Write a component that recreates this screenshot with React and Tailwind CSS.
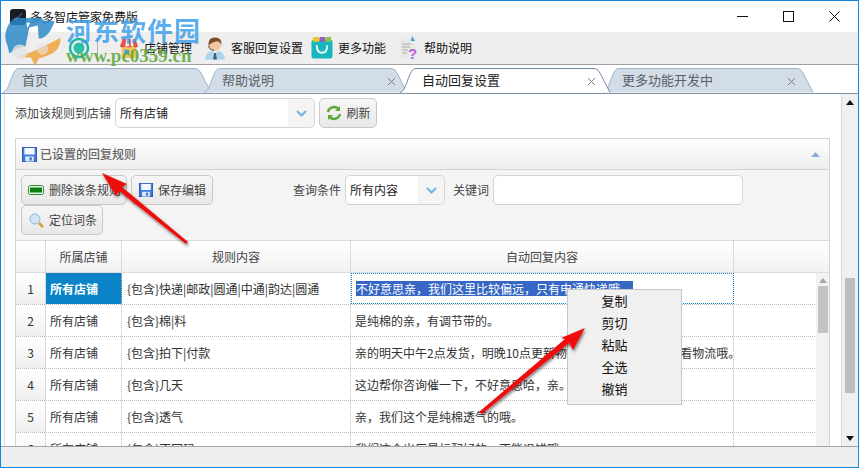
import React from "react";

const font = { fontFamily: '"Noto Sans CJK SC","Liberation Sans",sans-serif' };

function Save({ size = 16 }) {
  return (
    <svg width={size} height={size} viewBox="0 0 16 16">
      <rect x="0.5" y="0.5" width="15" height="15" fill="#3f78e0" stroke="#2a55b0" />
      <rect x="2.5" y="1" width="11" height="7" fill="#f4f8ff" />
      <rect x="3.5" y="10" width="9" height="5.5" fill="#dfe7f5" />
      <rect x="8" y="11" width="2.5" height="3.5" fill="#3f78e0" />
    </svg>
  );
}

function Tab({ label, active, close, w, closeRight, textLeft }) {
  return (
    <div className={`relative h-[25px] -ml-[8px] shrink-0 ${active ? "z-20" : "z-10"}`} style={{ width: w }}>
      <svg className="absolute inset-0" width={w} height="25" viewBox={`0 0 ${w} 25`} preserveAspectRatio="none">
        <path
          d={`M0 24.5 C6 24 8 6 13 1.5 Q14 0.5 17 0.5 H${w - 17} Q${w - 13} 0.5 ${w - 11} 5 L${w - 1} 24.5`}
          fill={active ? "#ffffff" : "#d3dde8"}
          stroke={active ? "#6f8aa8" : "#9db2c9"}
        />
      </svg>
      <span className={`absolute top-[2px] text-[13px] leading-[20px] ${active ? "text-[#222]" : "text-[#5b5f66]"}`} style={{ left: textLeft }}>{label}</span>
      {close && (
        <svg className="absolute top-[9px]" style={{ right: closeRight }} width="9" height="9" viewBox="0 0 9 9">
          <path d="M1 1 L8 8 M8 1 L1 8" stroke="#7b8087" strokeWidth="1" />
        </svg>
      )}
    </div>
  );
}

function Btn({ icon, label, className = "" }) {
  return (
    <div className={`h-[30px] flex items-center gap-[5px] rounded-[5px] border border-[#c8c8c8] bg-gradient-to-b from-[#f6f6f6] to-[#e8e8e8] text-[12px] text-[#444] ${className}`}>
      {icon}
      <span>{label}</span>
    </div>
  );
}

const rows = [
  ["1", "所有店铺", "{包含}快递|邮政|圆通|中通|韵达|圆通", ""],
  ["2", "所有店铺", "{包含}棉|料", "是纯棉的亲，有调节带的。"],
  ["3", "所有店铺", "{包含}拍下|付款", "亲的明天中午2点发货，明晚10点更新物流信息，到时可以\u00A0\u00A0去看物流哦。"],
  ["4", "所有店铺", "{包含}几天", "这边帮你咨询催一下，不好意思哈，亲。"],
  ["5", "所有店铺", "{包含}透气", "亲，我们这个是纯棉透气的哦。"],
  ["6", "所有店铺", "{包含}不回码", "我们这个出厂是标配好的，不能退错哦。"],
];

function Row({ r, i }) {
  const first = i === 0;
  return (
    <div className="flex h-[32px] shrink-0 border-b border-dotted border-[#bdbdbd] text-[12px] text-[#333]">
      <div className="w-[30px] shrink-0 flex items-center justify-center bg-gradient-to-b from-white to-[#efefef] border-r border-dotted border-[#bdbdbd]">{r[0]}</div>
      <div className={`w-[76px] shrink-0 flex items-center border-r border-dotted border-[#bdbdbd] px-[4px] ${first ? "bg-[#0a84c6] text-white font-bold" : ""}`}>{r[1]}</div>
      <div className="w-[229px] shrink-0 flex items-center border-r border-dotted border-[#bdbdbd] px-[5px] whitespace-nowrap overflow-hidden">{r[2]}</div>
      <div className={`w-[383px] shrink-0 flex items-center px-[4px] whitespace-nowrap overflow-hidden ${first ? "border border-dotted border-[#0a84c6]" : "border-r border-dotted border-[#bdbdbd]"}`}>
        {first ? (
          <span className="bg-[#3767c4] text-white text-[12px] leading-[15px] w-[277px] overflow-hidden">不好意思亲，我们这里比较偏远，只有申通快递哦</span>
        ) : r[3]}
      </div>
      <div className="flex-1" />
    </div>
  );
}

export default function App() {
  return (
    <div className="relative w-[859px] h-[468px] overflow-hidden bg-white border border-[#1585d8] flex flex-col" style={font}>
      {/* title */}
      <div className="h-[31px] shrink-0 flex items-center bg-white pl-[9px]">
        <svg width="16" height="16" viewBox="0 0 16 16">
          <rect width="16" height="16" rx="3" fill="#1b1b22" />
          <path d="M3 11 L7 8 L6 12 L12 4" stroke="#4a7fb5" fill="none" />
        </svg>
        <span className="ml-[4px] text-[12px] text-[#111]">多多智店管家免费版</span>
        <div className="ml-auto flex items-center">
          <svg className="mr-[35px]" width="11" height="11" viewBox="0 0 11 11"><path d="M0 5.5 H11" stroke="#111" /></svg>
          <svg className="mr-[35px]" width="11" height="11" viewBox="0 0 11 11"><rect x="0.5" y="0.5" width="10" height="10" fill="none" stroke="#111" /></svg>
          <svg className="mr-[18px]" width="11" height="11" viewBox="0 0 11 11"><path d="M0.5 0.5 L10.5 10.5 M10.5 0.5 L0.5 10.5" stroke="#111" /></svg>
        </div>
      </div>

      {/* toolbar */}
      <div className="h-[33px] shrink-0 bg-[#eeeeee] border-b border-[#a0a0a0] flex items-center text-[12px] text-[#111]">
        <svg className="ml-[67px]" width="22" height="22" viewBox="0 0 22 22">
          <circle cx="11" cy="11" r="9" fill="none" stroke="#1fb7a5" strokeWidth="2.5" />
          <circle cx="11" cy="11" r="5.5" fill="#2cc0a8" />
        </svg>
        <div className="ml-[7px] w-px h-[20px] bg-[#b5b5b5]" />
        <svg className="ml-[21px]" width="20" height="24" viewBox="0 0 22 24">
          <rect x="3" y="10" width="16" height="13" fill="#f3c35a" />
          <rect x="6" y="14" width="5" height="5" fill="#3a9fd8" />
          <path d="M4 2 H18 L21 10 Q18 13 15 10 Q11 13 7 10 Q4 13 1 10 Z" fill="#e8534a" />
          <path d="M8 2 H11 V10 H7 Z M13 2 H15 L16 10 H13 Z" fill="#f7f0e6" />
        </svg>
        <span className="ml-[5px]">店铺管理</span>
        <svg className="ml-[12px]" width="22" height="25" viewBox="0 0 24 26">
          <path d="M1 25 Q2 17 9 16 L12 19 L15 16 Q22 17 23 25 Z" fill="#a9d3ee" />
          <path d="M11 18 H13 L14 25 H10 Z" fill="#4a5b70" />
          <circle cx="12" cy="9" r="6.5" fill="#f0c7a0" />
          <path d="M5 10 Q4 1 12 1 Q20 1 19 10 Q18 5 14 5 Q8 6 5 10 Z" fill="#7a4a2c" />
          <path d="M5 10 Q6 15 11 15" stroke="#333" fill="none" />
        </svg>
        <span className="ml-[5px]">客服回复设置</span>
        <svg className="ml-[8px]" width="22" height="24" viewBox="0 0 23 24">
          <rect x="0.5" y="3" width="22" height="20" rx="3" fill="#19b5be" />
          <rect x="2" y="0.5" width="7" height="5" rx="1" fill="#f2c230" />
          <rect x="9" y="0.5" width="6" height="5" rx="1" fill="#9b59c4" />
          <rect x="15" y="0.5" width="6" height="5" rx="1" fill="#8cc63e" />
          <path d="M6 9 Q6 17 11.5 17 Q17 17 17 9" fill="none" stroke="#e8fbfb" strokeWidth="2" />
        </svg>
        <span className="ml-[5px]">更多功能</span>
        <svg className="ml-[13px]" width="20" height="24" viewBox="0 0 20 24">
          <path d="M1 3 H12 L16 7 V22 H1 Z" fill="#e9e9e9" />
          <path d="M3 8 H12 M3 11 H11 M3 14 H9 M3 17 H8" stroke="#a8a8a8" />
          <path d="M13 0 L16 5 H12 Z" fill="#3aa0c8" />
          <text x="9" y="23" fontSize="15" fontWeight="700" fill="#b565d8" fontFamily="Liberation Sans">?</text>
        </svg>
        <span className="ml-[5px]">帮助说明</span>
      </div>

      {/* tab strip */}
      <div className="h-[29px] shrink-0 bg-white flex items-end pl-[10px] border-b border-[#7f95ae]">
        <Tab label="首页" w={209} textLeft={19} />
        <Tab label="帮助说明" w={204} close closeRight={12} textLeft={18} />
        <Tab label="自动回复设置" w={211} active close closeRight={15} textLeft={22} />
        <Tab label="更多功能开发中" w={211} close closeRight={18} textLeft={19} />
      </div>

      {/* body */}
      <div className="flex-1 min-h-0 flex overflow-hidden pl-[1px]">
        <div className="w-[826px] shrink-0 ml-[2px] border-l border-[#d8d8d8] relative flex flex-col min-h-0">
          <div className="h-[44px] shrink-0 flex items-center pl-[10px] pb-[6px] text-[12px] text-[#444]">
            <span>添加该规则到店铺</span>
            <div className="ml-[4px] w-[200px] h-[30px] rounded-[5px] border border-[#d4d4d4] bg-white flex items-center text-[#222] pl-[4px]">
              <span className="flex-1">所有店铺</span>
              <div className="w-[26px] h-full flex items-center justify-center bg-[#f4f4f4] rounded-r-[5px]">
                <svg width="11" height="7" viewBox="0 0 11 7"><path d="M1 1 L5.5 5.5 L10 1" stroke="#6fb6ea" strokeWidth="2" fill="none" /></svg>
              </div>
            </div>
            <Btn
              className="ml-[4px] w-[58px] justify-center"
              icon={
                <svg width="16" height="16" viewBox="0 0 16 16">
                  <path d="M2 7 A6 6 0 0 1 13 5 M14 9 A6 6 0 0 1 3 11" fill="none" stroke="#5fa83e" strokeWidth="2.5" />
                  <path d="M14 1 V6 H9 Z M2 15 V10 H7 Z" fill="#5fa83e" />
                </svg>
              }
              label="刷新"
            />
          </div>

          {/* panel */}
          <div className="ml-[10px] flex-1 min-h-0 border border-b-0 border-[#d2d2d2] flex flex-col overflow-hidden relative">
            <div className="h-[31px] shrink-0 bg-gradient-to-b from-white to-[#eeeeee] border-b border-[#d2d2d2] flex items-center pl-[6px] gap-[3px] text-[12px] text-[#666]">
              <Save size={15} />
              <span className="font-medium">已设置的回复规则</span>
              <svg className="ml-auto mr-[9px]" width="9" height="5" viewBox="0 0 9 5"><path d="M0 5 L4.5 0 L9 5 Z" fill="#8cabd6" /></svg>
            </div>
            <div className="h-[70px] shrink-0 bg-[#f4f4f4] relative flex flex-col pl-[5px] pt-[5px]">
              <div className="flex gap-[4px]">
                <Btn
                  className="w-[106px] pl-[6px]"
                  icon={<svg width="16" height="10" viewBox="0 0 16 10"><rect x="0.5" y="0.5" width="15" height="9" rx="2" fill="#e8f5e8" stroke="#2c8a2c" /><rect x="2" y="2.5" width="12" height="5" fill="#0f7d12" /></svg>}
                  label={<span className="whitespace-nowrap">删除该条规则</span>}
                />
                <Btn className="w-[82px] pl-[7px]" icon={<Save size={14} />} label="保存编辑" />
                <div className="flex items-center h-[30px] text-[12px] text-[#444]">
                  <span className="ml-[76px]">查询条件</span>
                  <div className="ml-[4px] w-[100px] h-[30px] rounded-[5px] border border-[#d4d4d4] bg-white flex items-center pl-[4px] text-[#222]">
                    <span className="flex-1">所有内容</span>
                    <div className="w-[26px] h-full flex items-center justify-center bg-[#f4f4f4] rounded-r-[5px]">
                      <svg width="11" height="7" viewBox="0 0 11 7"><path d="M1 1 L5.5 5.5 L10 1" stroke="#6fb6ea" strokeWidth="2" fill="none" /></svg>
                    </div>
                  </div>
                  <span className="ml-[8px]">关键词</span>
                  <div className="ml-[4px] w-[250px] h-[30px] rounded-[5px] border border-[#d4d4d4] bg-white" />
                </div>
              </div>
              <Btn
                className="w-[82px] pl-[7px]"
                icon={
                  <svg width="15" height="15" viewBox="0 0 15 15">
                    <circle cx="6" cy="6" r="5" fill="#cfe6f8" stroke="#8fb6d4" />
                    <path d="M10 10 L14 14" stroke="#d89a3a" strokeWidth="2.5" />
                  </svg>
                }
                label="定位词条"
              />
            </div>
            {/* grid */}
            <div className="flex-1 min-h-0 flex flex-col overflow-hidden bg-white relative">
              <div className="flex h-[33px] shrink-0 bg-gradient-to-b from-white to-[#f1f1f1] border-y border-[#dcdcdc] text-[12px] text-[#444]">
                <div className="w-[30px] shrink-0 border-r border-dotted border-[#bdbdbd]" />
                <div className="w-[76px] shrink-0 border-r border-dotted border-[#bdbdbd] flex items-center justify-center">所属店铺</div>
                <div className="w-[229px] shrink-0 border-r border-dotted border-[#bdbdbd] flex items-center justify-center">规则内容</div>
                <div className="w-[383px] shrink-0 border-r border-dotted border-[#bdbdbd] flex items-center justify-center">自动回复内容</div>
              </div>
              {rows.map((r, i) => <Row key={r[0]} r={r} i={i} />)}
              <div className="absolute right-0 top-[33px] bottom-0 w-[13px] bg-[#f2f2f2] flex flex-col items-center">
                <svg className="mt-[5px]" width="8" height="5" viewBox="0 0 8 5"><path d="M0 5 L4 0 L8 5 Z" fill="#a8a8a8" /></svg>
                <div className="mt-[3px] w-[10px] h-[47px] bg-[#c2c2c2]" />
              </div>
            </div>
          </div>
        </div>
        {/* outer scrollbar */}
        <div className="ml-[11px] w-[17px] shrink-0 border-l border-[#d8d8d8] bg-[#f0f0f0] flex flex-col items-center relative">
          <svg className="mt-[6px]" width="8" height="5" viewBox="0 0 8 5"><path d="M0 5 L4 0 L8 5 Z" fill="#111" /></svg>
          <div className="mt-[173px] w-[10px] h-[115px] bg-[#bdbdbd]" />
          <svg className="absolute bottom-[5px]" width="8" height="5" viewBox="0 0 8 5"><path d="M0 0 L4 5 L8 0 Z" fill="#111" /></svg>
        </div>
      </div>

      {/* status */}
      <div className="h-[21px] shrink-0 bg-[#eeeeee] border-t border-[#a5a5a5]" />

      {/* context menu */}
      <div className="absolute left-[566px] top-[288px] w-[115px] h-[116px] bg-[#f0f0f0] border border-[#c8c8c8] flex flex-col items-center pr-[20px] text-[13px] leading-[22px] text-[#111] z-30">
        <span>复制</span><span>剪切</span><span>粘贴</span><span>全选</span><span>撤销</span>
      </div>

      {/* annotation arrows */}
      <svg className="absolute -left-px -top-px z-40 pointer-events-none" width="859" height="468" viewBox="0 0 859 468">
        <defs>
          <filter id="sh" x="-20%" y="-20%" width="140%" height="140%">
            <feDropShadow dx="1" dy="2" stdDeviation="1.5" floodColor="#000" floodOpacity="0.5" />
          </filter>
        </defs>
        <g filter="url(#sh)" fill="#ee1111">
          <path d="M102 173 L127 184 L122 187 L188 242 L186 244 L119 191 L116 196 Z" />
          <path d="M585 328 L573 350 L569 343 L482 414 L479 412 L565 339 L561 338 Z" />
        </g>
      </svg>

      {/* watermark */}
      <div className="absolute left-[4px] top-[17px] z-50 pointer-events-none">
        <svg width="58" height="49" viewBox="0 0 58 52">
          <path d="M1 30 A24 24 0 0 1 40 3 Q46 2 51 4 L46 14 Q40 22 34 22 L33 8 L24 10 L20 30 Q8 32 3 38 Z" fill="#2b88c8" fillOpacity="0.85" />
          <path d="M10 42 Q30 36 57 21 Q58 36 40 41 L34 43 L30 51 L26 42 Z" fill="#f0a33c" fillOpacity="0.85" />
          <circle cx="14" cy="36" r="8" fill="#e4e4e4" fillOpacity="0.8" />
          <circle cx="38" cy="33" r="6" fill="#e4e4e4" fillOpacity="0.6" />
          <path d="M21 5 L25 5 L22 11 Z" fill="#fff" />
        </svg>
      </div>
      <span className="absolute left-[65px] top-[12px] z-50 pointer-events-none text-[26px] leading-[34px] font-bold text-[#3f9fe8]/85 tracking-[1px] whitespace-nowrap" style={{ fontFamily: '"Noto Sans CJK SC",serif' }}>河东软件园</span>
      <span className="absolute left-[65px] top-[45px] z-50 pointer-events-none text-[19px] leading-[20px] font-bold text-[#5fa83e]/90 whitespace-nowrap" style={{ fontFamily: '"Liberation Serif",serif' }}>www.pc0359.cn</span>
    </div>
  );
}
